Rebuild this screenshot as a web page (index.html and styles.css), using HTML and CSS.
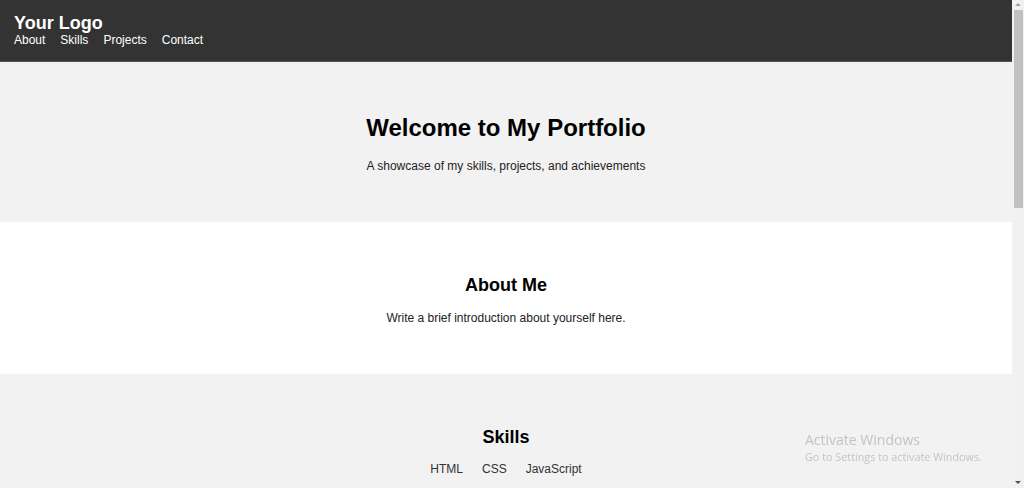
FILE: index.html
```html
<!DOCTYPE html>
<html lang="en">
<head>
<meta charset="utf-8">
<title>My Portfolio</title>
<link rel="stylesheet" href="styles.css">
</head>
<body>
<div class="page">
  <header class="site-header">
    <div class="logo">Your Logo</div>
    <nav class="nav">
      <a href="#about">About</a>
      <a href="#skills">Skills</a>
      <a href="#projects">Projects</a>
      <a href="#contact">Contact</a>
    </nav>
  </header>
  <section class="hero">
    <h1>Welcome to My Portfolio</h1>
    <p>A showcase of my skills, projects, and achievements</p>
  </section>
  <section class="section about" id="about">
    <h2>About Me</h2>
    <p>Write a brief introduction about yourself here.</p>
  </section>
  <section class="section skills" id="skills">
    <h2>Skills</h2>
    <ul class="skill-list">
      <li>HTML</li>
      <li>CSS</li>
      <li>JavaScript</li>
    </ul>
  </section>
</div>
<div class="scrollbar">
  <span class="arrow up"></span>
  <span class="thumb"></span>
  <span class="arrow down"></span>
</div>
<div class="activate">
  <div class="act-title">Activate Windows</div>
  <div class="act-sub">Go to Settings to activate Windows.</div>
</div>
</body>
</html>
```
FILE: styles.css
```css
html { scrollbar-width: none; }
html::-webkit-scrollbar { display: none; }
body {
  margin: 0;
  font-family: "Liberation Sans", Arial, sans-serif;
  font-size: 12px;
  color: #222;
  background: #f2f2f2;
}
.page { margin-right: 12px; }
.site-header {
  background: #333;
  color: #fff;
  padding: 13px 14px 14px;
  border-bottom: 1px solid #555;
  height: 34px;
}
.logo { font-size: 18px; font-weight: bold; line-height: 20px; }
.nav { display: flex; gap: 15px; line-height: 14px; }
.nav a { color: #fff; text-decoration: none; font-size: 12px; }
.hero {
  background: #f2f2f2;
  text-align: center;
  padding: 52px 0 49px;
}
.hero h1 { margin: 0 0 17px; font-size: 24px; line-height: 28px; color: #000; }
.hero p { margin: 0; line-height: 14px; }
.section { text-align: center; padding: 53px 0 55px; }
.section h2 { margin: 0 0 9px; font-size: 18px; line-height: 21px; color: #000; }
.section p { margin: 0; line-height: 14px; }
.about { background: #fff; padding-bottom: 49px; }
.about h2 { margin-bottom: 15px; }
.skills { background: #f2f2f2; }
.skill-list {
  list-style: none;
  margin: 14px 0 0;
  padding: 0;
  display: flex;
  justify-content: center;
  gap: 19px;
  line-height: 14px;
  color: #333;
}
.scrollbar {
  position: fixed;
  top: 0; right: 0; bottom: 0;
  width: 12px;
  background: #f1f1f1;
}
.thumb {
  position: absolute;
  left: 2px; right: 1px;
  top: 10px; height: 198px;
  background: #c1c1c1;
}
.arrow {
  position: absolute;
  left: 3px;
  width: 0; height: 0;
  border-left: 3px solid transparent;
  border-right: 3px solid transparent;
}
.arrow.up { top: 3px; border-bottom: 3px solid #a3a3a3; }
.arrow.down { bottom: 4px; border-top: 3px solid #505050; }
.activate {
  position: fixed;
  left: 805px;
  top: 431px;
  font-family: "Open Sans", "Noto Sans", sans-serif;
  color: #c3c3c3;
  pointer-events: none;
}
.act-title { font-size: 14px; line-height: 18px; }
.act-sub { font-size: 10.8px; line-height: 16px; }
```
